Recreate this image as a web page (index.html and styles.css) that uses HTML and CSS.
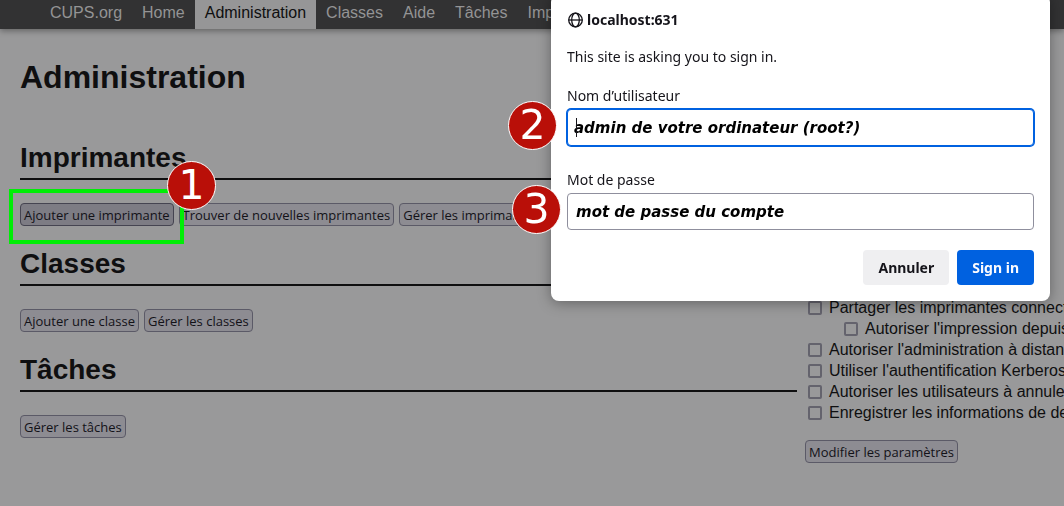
FILE: index.html
```html
<!DOCTYPE html>
<html lang="fr">
<head>
<meta charset="utf-8">
<title>Administration - CUPS</title>
<link rel="stylesheet" href="styles.css">
</head>
<body>
<nav class="nav">
  <a href="#">CUPS.org</a>
  <a href="#">Home</a>
  <a href="#" class="active">Administration</a>
  <a href="#">Classes</a>
  <a href="#">Aide</a>
  <a href="#">Tâches</a>
  <a href="#">Imprimantes</a>
</nav>
<main class="page">
  <h1>Administration</h1>
  <div class="columns">
    <div class="sections">
      <section class="section">
        <h2>Imprimantes</h2>
        <div class="actions">
          <div class="step">
            <button class="btn pressed" type="button">Ajouter une imprimante</button>
            <span class="highlight"></span>
          </div>
          <button class="btn" type="button">Trouver de nouvelles imprimantes</button>
          <button class="btn" type="button">Gérer les imprimantes</button>
          <span class="badge badge-one">1</span>
        </div>
      </section>
      <section class="section">
        <h2>Classes</h2>
        <div class="actions">
          <button class="btn" type="button">Ajouter une classe</button>
          <button class="btn" type="button">Gérer les classes</button>
        </div>
      </section>
      <section class="section">
        <h2>Tâches</h2>
        <div class="actions">
          <button class="btn" type="button">Gérer les tâches</button>
        </div>
      </section>
    </div>
    <form class="server">
      <label class="option"><input type="checkbox">Partager les imprimantes connectées</label>
      <label class="option nested"><input type="checkbox">Autoriser l'impression depuis Internet</label>
      <label class="option"><input type="checkbox">Autoriser l'administration à distance</label>
      <label class="option"><input type="checkbox">Utiliser l'authentification Kerberos</label>
      <label class="option"><input type="checkbox">Autoriser les utilisateurs à annuler</label>
      <label class="option"><input type="checkbox">Enregistrer les informations de debogage</label>
      <button class="btn save" type="button">Modifier les paramètres</button>
    </form>
  </div>
</main>
<form class="dialog" role="dialog" aria-labelledby="host">
  <div class="host">
    <svg width="16" height="16" viewBox="0 0 16 16" fill="none" stroke="#15141a" stroke-width="1.3" aria-hidden="true">
      <circle cx="8.5" cy="8" r="6.8"/>
      <ellipse cx="8.5" cy="8" rx="3.8" ry="6.8"/>
      <path d="M1.7 8h13.6"/>
    </svg>
    <strong id="host">localhost:631</strong>
  </div>
  <p class="message">This site is asking you to sign in.</p>
  <label class="label" for="user">Nom d’utilisateur</label>
  <div class="field">
    <input class="input focused" id="user" type="text" value="admin de votre ordinateur (root?)">
    <span class="caret"></span>
    <span class="badge badge-two">2</span>
  </div>
  <label class="label" for="password">Mot de passe</label>
  <div class="field">
    <input class="input" id="password" type="text" value="mot de passe du compte">
    <span class="badge badge-three">3</span>
  </div>
  <div class="buttons">
    <button class="choice" type="button">Annuler</button>
    <button class="choice primary" type="button">Sign in</button>
  </div>
</form>
</body>
</html>
```

FILE: styles.css
```css
* {
  box-sizing: border-box;
}

html {
  background: #99999a;
  overflow: hidden;
}

body {
  margin: 0;
  overflow: hidden;
  color: #0f0f10;
  font: 16px/21px "Liberation Sans", Arial, sans-serif;
}

.nav {
  display: flex;
  height: 29px;
  padding-left: 40px;
  background: #323233;
  box-shadow: 0 2px 6px rgba(0, 0, 0, 0.35);
}

.nav a {
  padding: 2px 10px 6px;
  color: #949495;
  text-decoration: none;
}

.nav .active {
  background: #969697;
  color: #0f0f10;
}

.page {
  padding: 30px 0 24px 20px;
}

h1 {
  margin: 0 0 47px;
  font-size: 32px;
  line-height: 36px;
}

h2 {
  margin: 0 0 23px;
  padding-bottom: 4px;
  border-bottom: 2px solid #0f0f10;
  font-size: 28px;
  line-height: 32px;
}

.columns {
  display: grid;
  grid-template-columns: minmax(0, 3fr) minmax(0, 1fr);
  gap: 8px;
}

.section {
  margin-bottom: 22px;
}

.actions {
  position: relative;
  display: flex;
  gap: 5px;
}

.step {
  position: relative;
  display: flex;
}

.btn {
  height: 23px;
  padding: 1px 3px 0;
  border: 1px solid #5b5a67;
  border-radius: 4px;
  background: #8d8c92;
  color: #131218;
  font: 13px/20px "Open Sans", "Noto Sans", sans-serif;
  white-space: nowrap;
}

.pressed {
  background: #7d7c84;
  border-color: #454451;
}

.highlight {
  position: absolute;
  z-index: 1;
  inset: -14px -10px -18px -11px;
  border: 4px solid #00ee06;
}

.badge {
  position: absolute;
  z-index: 2;
  display: flex;
  align-items: center;
  justify-content: center;
  width: 49px;
  height: 49px;
  border: 1px solid #fff;
  border-radius: 50%;
  background: #b90f08;
  color: #fff;
  font: 41px/47px "DejaVu Sans", sans-serif;
}

.badge-one {
  top: -42px;
  left: 147px;
}

.badge-two {
  top: -8px;
  left: -59px;
}

.badge-three {
  top: -8px;
  left: -55px;
}

.server {
  display: flex;
  flex-direction: column;
  align-items: flex-start;
  padding-top: 155px;
}

.option {
  display: flex;
  align-items: center;
  gap: 7px;
  padding-left: 3px;
  white-space: nowrap;
}

.nested {
  padding-left: 39px;
}

.option input {
  appearance: none;
  flex: none;
  width: 14px;
  height: 14px;
  margin: 0;
  border: 2px solid #64636d;
  border-radius: 2px;
}

.save {
  margin-top: 17px;
}

.dialog {
  position: fixed;
  z-index: 3;
  top: -6px;
  right: 14px;
  width: 499px;
  padding: 16px;
  border-radius: 8px;
  background: #fff;
  box-shadow: 0 2px 14px rgba(0, 0, 0, 0.35);
  color: #15141a;
  font: 14px/20px "Noto Sans", sans-serif;
}

.host {
  display: flex;
  align-items: center;
  gap: 4px;
}

.message {
  margin: 17px 0 15px;
}

.label {
  display: block;
  padding-top: 4px;
}

.field {
  position: relative;
  margin: 3px 0 20px;
}

.input {
  display: block;
  width: 100%;
  height: 37px;
  padding: 0 8px;
  border: 1px solid #8f8f9d;
  border-radius: 4px;
  outline: 0;
  background: #fff;
  color: #000;
  font: italic bold 15px/20px "DejaVu Sans", sans-serif;
}

.focused {
  padding: 0 6px;
  border-color: #0061e0;
  box-shadow: 0 0 0 1px #0061e0;
}

.caret {
  position: absolute;
  top: 9px;
  left: 9px;
  width: 1px;
  height: 19px;
  background: #15141a;
}

.buttons {
  display: flex;
  justify-content: flex-end;
  gap: 8px;
}

.choice {
  height: 35px;
  padding: 0 15px;
  border: 0;
  border-radius: 4px;
  background: #efeff1;
  color: #15141a;
  font: bold 14px/20px "Noto Sans", sans-serif;
}

.primary {
  background: #0061e0;
  color: #fbfbfe;
}
```
